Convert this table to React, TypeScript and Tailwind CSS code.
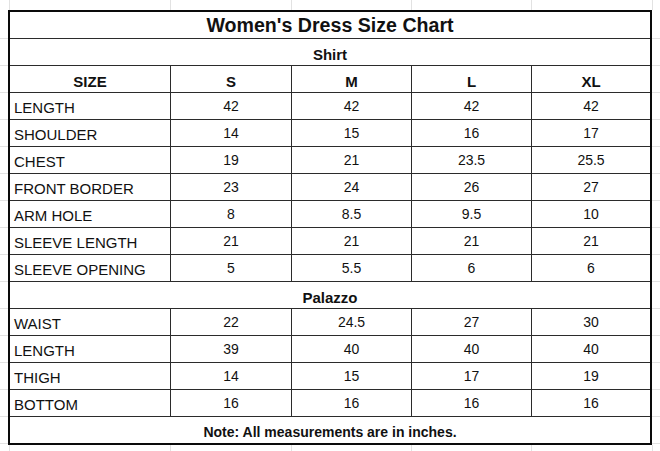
import React from 'react';

const shirtRows: [string, string, string, string, string][] = [
    ['LENGTH', '42', '42', '42', '42'],
    ['SHOULDER', '14', '15', '16', '17'],
    ['CHEST', '19', '21', '23.5', '25.5'],
    ['FRONT BORDER', '23', '24', '26', '27'],
    ['ARM HOLE', '8', '8.5', '9.5', '10'],
    ['SLEEVE LENGTH', '21', '21', '21', '21'],
    ['SLEEVE OPENING', '5', '5.5', '6', '6'],
];

const palazzoRows: [string, string, string, string, string][] = [
    ['WAIST', '22', '24.5', '27', '30'],
    ['LENGTH', '39', '40', '40', '40'],
    ['THIGH', '14', '15', '17', '19'],
    ['BOTTOM', '16', '16', '16', '16'],
];

// faint spreadsheet grid outside the table
const GridStrip = ({ height }: { height: string }) => (
    <div className={`flex ${height}`}>
        <div className="w-[10px] shrink-0 border-r border-[#e2e2e2]" />
        <div className="w-[161px] shrink-0 border-r border-[#e2e2e2]" />
        <div className="w-[121px] shrink-0 border-r border-[#e2e2e2]" />
        <div className="w-[120px] shrink-0 border-r border-[#e2e2e2]" />
        <div className="w-[120px] shrink-0 border-r border-[#e2e2e2]" />
        <div className="w-[121px] shrink-0 border-r border-[#e2e2e2]" />
    </div>
);

const GridSide = () => (
    <div className="w-[8px] shrink-0 pt-[2px]">
        {Array.from({ length: 16 }).map((_, i) => (
            <div key={i} className="h-[27px] border-b border-[#e2e2e2]" />
        ))}
    </div>
);

const DataRow = ({ row }: { row: [string, string, string, string, string] }) => (
    <>
        <div className="bg-white pl-[4px] pt-[4px] text-[15px] leading-[22px]">{row[0]}</div>
        {row.slice(1).map((v, i) => (
            <div key={i} className="bg-white text-center text-[14px] leading-[26px]">
                {v}
            </div>
        ))}
    </>
);

export default function App() {
    return (
        <div
            className="w-[660px] h-[451px] overflow-hidden bg-white text-[#111]"
            style={{ fontFamily: '"Liberation Sans", Arial, sans-serif' }}
        >
            <GridStrip height="h-[10px]" />
            <div className="flex">
                <GridSide />
                <div className="w-[644px] shrink-0 border-2 border-[#0a0a0a] bg-[#2b2b2b] grid grid-cols-[160px_120px_119px_119px_118px] auto-rows-[26px] gap-px">
                    <div className="col-span-5 bg-white text-center text-[19.6px] font-bold leading-[26px]">
                        Women's Dress Size Chart
                    </div>
                    <div className="col-span-5 bg-white text-center pt-[5px] text-[15px] font-bold leading-[21px]">
                        Shirt
                    </div>
                    {['SIZE', 'S', 'M', 'L', 'XL'].map((h) => (
                        <div key={h} className="bg-white text-center pt-[5px] text-[15px] font-bold leading-[21px]">
                            {h}
                        </div>
                    ))}
                    {shirtRows.map((r, i) => (
                        <DataRow key={`s${i}`} row={r} />
                    ))}
                    <div className="col-span-5 bg-white text-center pt-[5px] text-[15px] font-bold leading-[21px]">
                        Palazzo
                    </div>
                    {palazzoRows.map((r, i) => (
                        <DataRow key={`p${i}`} row={r} />
                    ))}
                    <div className="col-span-5 bg-white text-center pt-[4px] text-[14px] font-bold leading-[22px]">
                        Note: All measurements are in inches.
                    </div>
                </div>
                <GridSide />
            </div>
            <GridStrip height="h-[7px]" />
        </div>
    );
}
